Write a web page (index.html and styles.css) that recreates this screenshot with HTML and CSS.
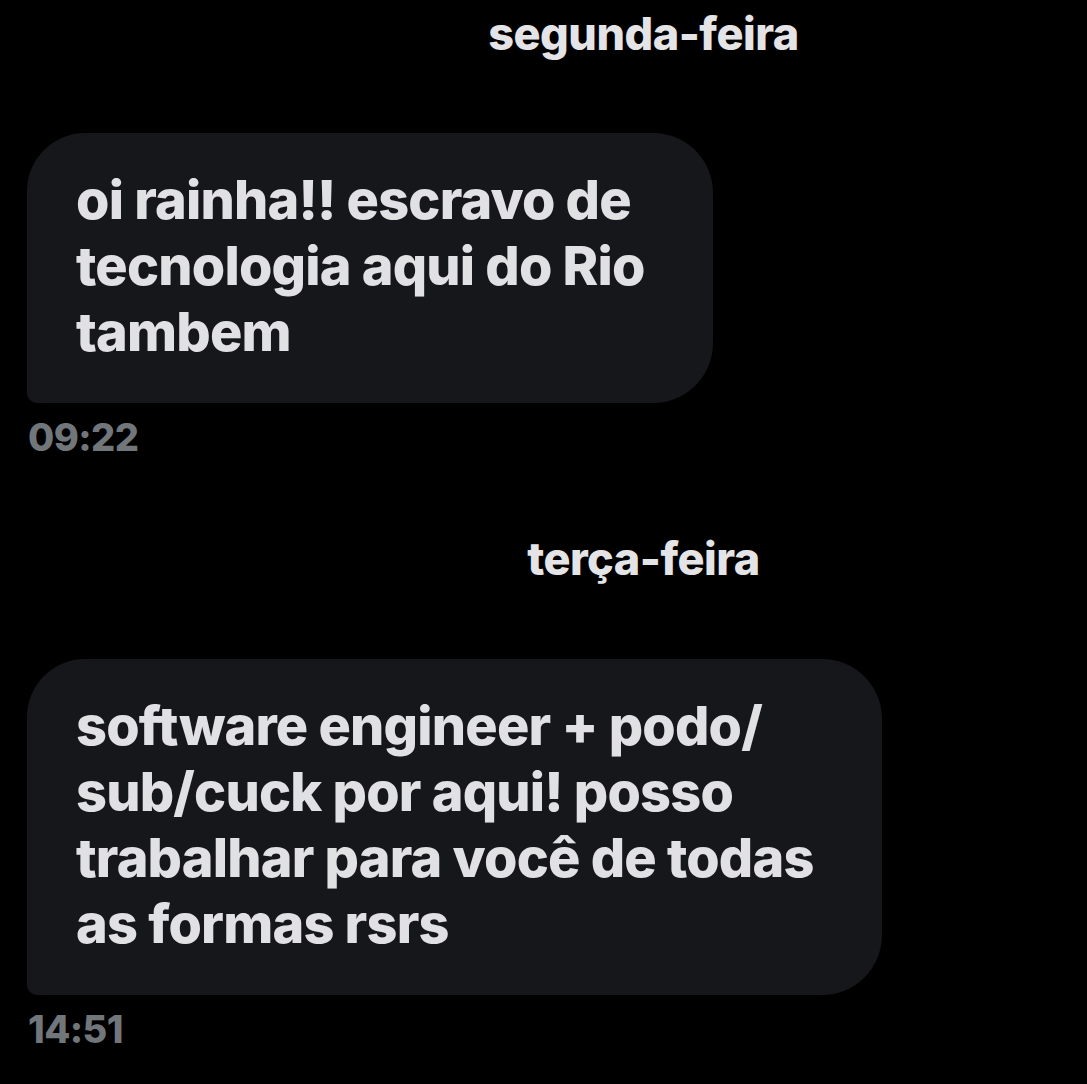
FILE: index.html
```html
<!DOCTYPE html>
<html lang="pt-BR">
<head>
<meta charset="utf-8">
<title>Mensagens</title>
<link rel="stylesheet" href="styles.css">
</head>
<body>
<main class="chat">
  <div class="day">segunda-feira</div>
  <div class="msg">
    <div class="bubble bubble-1">oi rainha!! escravo de<br>tecnologia aqui do Rio<br>tambem</div>
    <div class="time">09:22</div>
  </div>
  <div class="day day-2">terça-feira</div>
  <div class="msg">
    <div class="bubble bubble-2">software engineer + podo/<br>sub/cuck por aqui! posso<br>trabalhar para você de todas<br>as formas rsrs</div>
    <div class="time">14:51</div>
  </div>
</main>
</body>
</html>
```
FILE: styles.css
```css
html, body {
  margin: 0;
  padding: 0;
  background: #000;
}
body {
  font-family: Inter, "Noto Sans", sans-serif;
  font-weight: 800;
  width: 1087px;
  height: 1084px;
  overflow: hidden;
}
.chat {
  display: flex;
  flex-direction: column;
}
.day {
  padding-left: 200px;
  text-align: center;
  color: #e4e4e6;
  font-size: 45px;
  line-height: 52px;
  letter-spacing: -0.5px;
  margin-top: 8px;
}
.day-2 {
  margin-top: 73px;
}
.msg {
  display: flex;
  flex-direction: column;
  align-items: flex-start;
  padding-left: 27px;
}
.bubble {
  background: #16171a;
  color: #e1e1e3;
  font-size: 54px;
  line-height: 66px;
  letter-spacing: -0.8px;
  padding: 34px 20px 38px 49px;
  border-radius: 58px 60px 60px 10px;
  box-sizing: border-box;
}
.bubble-1 {
  margin-top: 73px;
  width: 686px;
}
.bubble-2 {
  margin-top: 74px;
  width: 855px;
}
.time {
  color: #71767b;
  font-size: 38px;
  line-height: 46px;
  letter-spacing: -0.6px;
  margin-top: 11px;
  padding-left: 1px;
}
```
